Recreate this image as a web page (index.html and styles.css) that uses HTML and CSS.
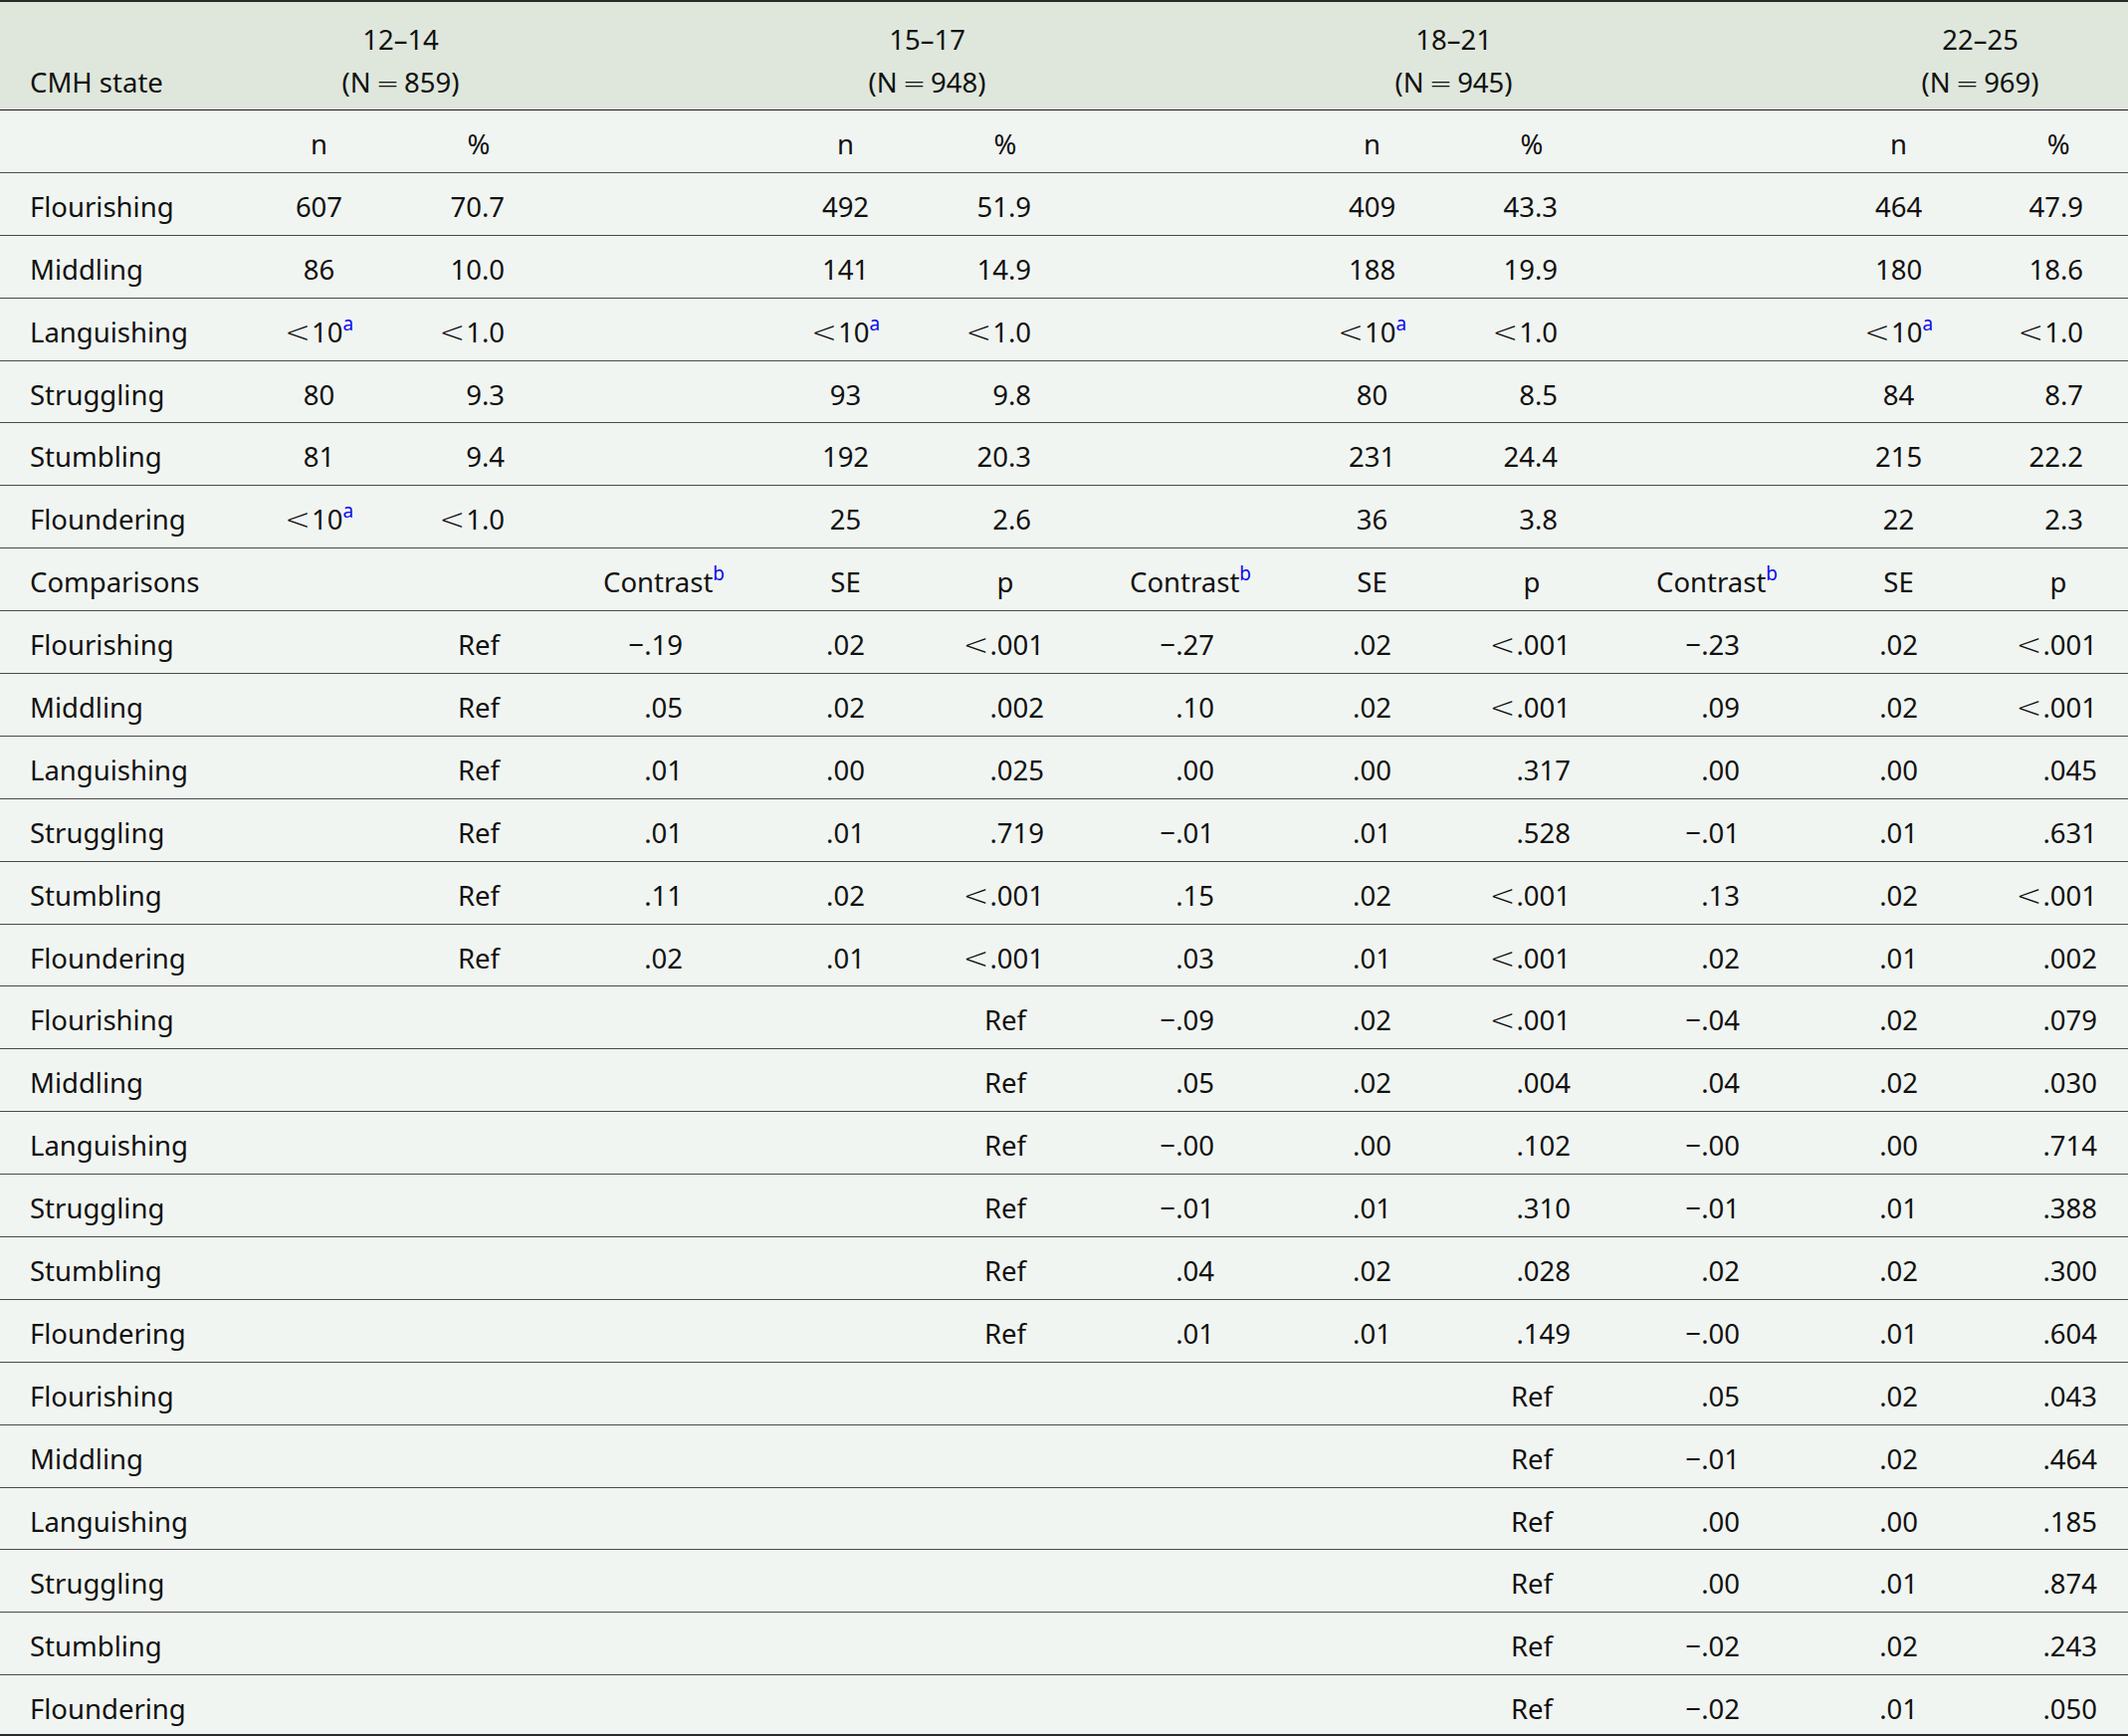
FILE: index.html
```html
<!DOCTYPE html>
<html lang="en">
<head>
<meta charset="utf-8">
<title>CMH state comparisons</title>
<link rel="stylesheet" href="styles.css">
</head>
<body>
<table class="t">
  <colgroup>
    <col class="w-lab"><col class="w-n"><col class="w-p">
    <col class="w-c"><col class="w-n"><col class="w-p">
    <col class="w-c"><col class="w-n"><col class="w-p">
    <col class="w-c"><col class="w-n"><col class="w-plast">
  </colgroup>
  <thead>
    <tr>
      <th class="lab">CMH state</th>
      <th colspan="2">12–14<br>(N<span class="eq">=</span>859)</th>
      <th></th>
      <th colspan="2">15–17<br>(N<span class="eq">=</span>948)</th>
      <th></th>
      <th colspan="2">18–21<br>(N<span class="eq">=</span>945)</th>
      <th></th>
      <th colspan="2" class="last">22–25<br>(N<span class="eq">=</span>969)</th>
    </tr>
  </thead>
  <tbody>
    <tr><td class="lab"></td><td>n</td><td>%</td><td></td><td>n</td><td>%</td><td></td><td>n</td><td>%</td><td></td><td>n</td><td class="last">%</td></tr>
    <tr><td class="lab">Flourishing</td><td>607</td><td class="pct">70.7</td><td></td><td>492</td><td class="pct">51.9</td><td></td><td>409</td><td class="pct">43.3</td><td></td><td>464</td><td class="pct-last">47.9</td></tr>
    <tr><td class="lab">Middling</td><td>86</td><td class="pct">10.0</td><td></td><td>141</td><td class="pct">14.9</td><td></td><td>188</td><td class="pct">19.9</td><td></td><td>180</td><td class="pct-last">18.6</td></tr>
    <tr><td class="lab">Languishing</td><td><span class="lt">&lt;</span>10<sup>a</sup></td><td class="pct"><span class="lt">&lt;</span>1.0</td><td></td><td><span class="lt">&lt;</span>10<sup>a</sup></td><td class="pct"><span class="lt">&lt;</span>1.0</td><td></td><td><span class="lt">&lt;</span>10<sup>a</sup></td><td class="pct"><span class="lt">&lt;</span>1.0</td><td></td><td><span class="lt">&lt;</span>10<sup>a</sup></td><td class="pct-last"><span class="lt">&lt;</span>1.0</td></tr>
    <tr class="s"><td class="lab">Struggling</td><td>80</td><td class="pct">9.3</td><td></td><td>93</td><td class="pct">9.8</td><td></td><td>80</td><td class="pct">8.5</td><td></td><td>84</td><td class="pct-last">8.7</td></tr>
    <tr><td class="lab">Stumbling</td><td>81</td><td class="pct">9.4</td><td></td><td>192</td><td class="pct">20.3</td><td></td><td>231</td><td class="pct">24.4</td><td></td><td>215</td><td class="pct-last">22.2</td></tr>
    <tr><td class="lab">Floundering</td><td><span class="lt">&lt;</span>10<sup>a</sup></td><td class="pct"><span class="lt">&lt;</span>1.0</td><td></td><td>25</td><td class="pct">2.6</td><td></td><td>36</td><td class="pct">3.8</td><td></td><td>22</td><td class="pct-last">2.3</td></tr>

    <tr><td class="lab">Comparisons</td><td></td><td></td><td>Contrast<sup>b</sup></td><td>SE</td><td>p</td><td>Contrast<sup>b</sup></td><td>SE</td><td>p</td><td>Contrast<sup>b</sup></td><td>SE</td><td class="last">p</td></tr>

    <tr><td class="lab">Flourishing</td><td></td><td>Ref</td><td class="con2">−.19</td><td>.02</td><td class="pv"><span class="lt">&lt;</span>.001</td><td class="con3">−.27</td><td>.02</td><td class="pv"><span class="lt">&lt;</span>.001</td><td class="con4">−.23</td><td>.02</td><td class="pv-last"><span class="lt">&lt;</span>.001</td></tr>
    <tr><td class="lab">Middling</td><td></td><td>Ref</td><td class="con2">.05</td><td>.02</td><td class="pv">.002</td><td class="con3">.10</td><td>.02</td><td class="pv"><span class="lt">&lt;</span>.001</td><td class="con4">.09</td><td>.02</td><td class="pv-last"><span class="lt">&lt;</span>.001</td></tr>
    <tr><td class="lab">Languishing</td><td></td><td>Ref</td><td class="con2">.01</td><td>.00</td><td class="pv">.025</td><td class="con3">.00</td><td>.00</td><td class="pv">.317</td><td class="con4">.00</td><td>.00</td><td class="pv-last">.045</td></tr>
    <tr><td class="lab">Struggling</td><td></td><td>Ref</td><td class="con2">.01</td><td>.01</td><td class="pv">.719</td><td class="con3">−.01</td><td>.01</td><td class="pv">.528</td><td class="con4">−.01</td><td>.01</td><td class="pv-last">.631</td></tr>
    <tr><td class="lab">Stumbling</td><td></td><td>Ref</td><td class="con2">.11</td><td>.02</td><td class="pv"><span class="lt">&lt;</span>.001</td><td class="con3">.15</td><td>.02</td><td class="pv"><span class="lt">&lt;</span>.001</td><td class="con4">.13</td><td>.02</td><td class="pv-last"><span class="lt">&lt;</span>.001</td></tr>
    <tr class="s"><td class="lab">Floundering</td><td></td><td>Ref</td><td class="con2">.02</td><td>.01</td><td class="pv"><span class="lt">&lt;</span>.001</td><td class="con3">.03</td><td>.01</td><td class="pv"><span class="lt">&lt;</span>.001</td><td class="con4">.02</td><td>.01</td><td class="pv-last">.002</td></tr>

    <tr><td class="lab">Flourishing</td><td></td><td></td><td></td><td></td><td>Ref</td><td class="con3">−.09</td><td>.02</td><td class="pv"><span class="lt">&lt;</span>.001</td><td class="con4">−.04</td><td>.02</td><td class="pv-last">.079</td></tr>
    <tr><td class="lab">Middling</td><td></td><td></td><td></td><td></td><td>Ref</td><td class="con3">.05</td><td>.02</td><td class="pv">.004</td><td class="con4">.04</td><td>.02</td><td class="pv-last">.030</td></tr>
    <tr><td class="lab">Languishing</td><td></td><td></td><td></td><td></td><td>Ref</td><td class="con3">−.00</td><td>.00</td><td class="pv">.102</td><td class="con4">−.00</td><td>.00</td><td class="pv-last">.714</td></tr>
    <tr><td class="lab">Struggling</td><td></td><td></td><td></td><td></td><td>Ref</td><td class="con3">−.01</td><td>.01</td><td class="pv">.310</td><td class="con4">−.01</td><td>.01</td><td class="pv-last">.388</td></tr>
    <tr><td class="lab">Stumbling</td><td></td><td></td><td></td><td></td><td>Ref</td><td class="con3">.04</td><td>.02</td><td class="pv">.028</td><td class="con4">.02</td><td>.02</td><td class="pv-last">.300</td></tr>
    <tr><td class="lab">Floundering</td><td></td><td></td><td></td><td></td><td>Ref</td><td class="con3">.01</td><td>.01</td><td class="pv">.149</td><td class="con4">−.00</td><td>.01</td><td class="pv-last">.604</td></tr>

    <tr><td class="lab">Flourishing</td><td></td><td></td><td></td><td></td><td></td><td></td><td></td><td>Ref</td><td class="con4">.05</td><td>.02</td><td class="pv-last">.043</td></tr>
    <tr><td class="lab">Middling</td><td></td><td></td><td></td><td></td><td></td><td></td><td></td><td>Ref</td><td class="con4">−.01</td><td>.02</td><td class="pv-last">.464</td></tr>
    <tr class="s"><td class="lab">Languishing</td><td></td><td></td><td></td><td></td><td></td><td></td><td></td><td>Ref</td><td class="con4">.00</td><td>.00</td><td class="pv-last">.185</td></tr>
    <tr><td class="lab">Struggling</td><td></td><td></td><td></td><td></td><td></td><td></td><td></td><td>Ref</td><td class="con4">.00</td><td>.01</td><td class="pv-last">.874</td></tr>
    <tr><td class="lab">Stumbling</td><td></td><td></td><td></td><td></td><td></td><td></td><td></td><td>Ref</td><td class="con4">−.02</td><td>.02</td><td class="pv-last">.243</td></tr>
    <tr class="end"><td class="lab">Floundering</td><td></td><td></td><td></td><td></td><td></td><td></td><td></td><td>Ref</td><td class="con4">−.02</td><td>.01</td><td class="pv-last">.050</td></tr>
  </tbody>
</table>
</body>
</html>
```

FILE: styles.css
```css
html, body {
  margin: 0;
  padding: 0;
  background: #ffffff;
}

.t {
  width: 2138px;
  table-layout: fixed;
  border-collapse: separate;
  border-spacing: 0;
  font-family: "Noto Sans", "Open Sans", sans-serif;
  font-size: 27.5px;
  color: #111111;
  background: #f1f5f1;
  border-top: 2px solid #2a2a2a;
}

.w-lab { width: 242px; }
.w-n { width: 157px; }
.w-p { width: 164px; }
.w-c { width: 208px; }
.w-plast { width: 152px; }

.t th {
  background: #dfe7dc;
  font-weight: normal;
  vertical-align: bottom;
  text-align: center;
  line-height: 43px;
  padding: 16px 0 6px;
  border-bottom: 1px solid #1e1e1e;
  white-space: nowrap;
}

.t td {
  text-align: center;
  line-height: 30px;
  padding: 19px 0 13px;
  border-bottom: 1px solid #4a4a4a;
  white-space: nowrap;
}

.t tr.s td {
  padding-bottom: 12px;
}

.t tr.end td {
  padding-bottom: 10px;
  border-bottom: 2px solid #2a2a2a;
}

.t .lab {
  text-align: left;
  padding-left: 30px;
}

.t .last {
  padding-left: 12px;
}

.t .pct {
  text-align: right;
  padding-right: 56px;
}

.t .pct-last {
  text-align: right;
  padding-right: 45px;
}

.t .pv {
  text-align: right;
  padding-right: 43px;
}

.t .pv-last {
  text-align: right;
  padding-right: 31px;
}

.t .con2 {
  text-align: right;
  padding-right: 85px;
}

.t .con3 {
  text-align: right;
  padding-right: 80px;
}

.t .con4 {
  text-align: right;
  padding-right: 81px;
}

.lt {
  font-family: "DejaVu Sans", sans-serif;
  font-weight: 200;
  font-size: 31px;
  line-height: 0;
  margin-right: 1px;
}

.eq {
  font-family: "DejaVu Sans", sans-serif;
  font-weight: 200;
  font-size: 28px;
  line-height: 0;
  margin: 0 5px;
}

sup {
  font-size: 19px;
  line-height: 0;
  vertical-align: 12px;
  color: #0a0af0;
}
```
